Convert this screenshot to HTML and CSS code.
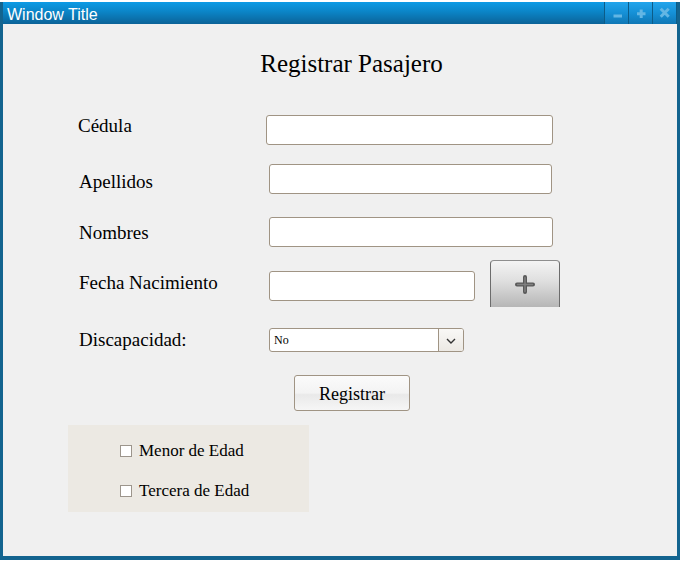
FILE: index.html
```html
<!DOCTYPE html>
<html lang="es">
<head>
<meta charset="utf-8">
<title>Registrar Pasajero</title>
<link rel="stylesheet" href="styles.css">
</head>
<body>
<div class="window">
  <div class="titlebar">
    <span class="title">Window Title</span>
    <div class="controls">
      <div class="ctl">
        <svg width="23" height="22" viewBox="0 0 23 22"><path d="M8.5 14H17" stroke="#63b6e4" stroke-width="3"/></svg>
      </div>
      <div class="ctl">
        <svg width="23" height="22" viewBox="0 0 23 22"><path d="M8 11.7H16.5M12.2 7.5V16" stroke="#63b6e4" stroke-width="3"/></svg>
      </div>
      <div class="ctl">
        <svg width="23" height="22" viewBox="0 0 23 22"><path d="M7.7 6.8L15.7 14.8M15.7 6.8L7.7 14.8" stroke="#63b6e4" stroke-width="3"/></svg>
      </div>
    </div>
  </div>
  <div class="content">
    <h1 class="heading">Registrar Pasajero</h1>

    <div class="row row-cedula">
      <label class="lbl lbl-cedula">Cédula</label>
      <input class="field field-cedula" type="text">
    </div>

    <div class="row row-apellidos">
      <label class="lbl lbl-apellidos">Apellidos</label>
      <input class="field field-apellidos" type="text">
    </div>

    <div class="row row-nombres">
      <label class="lbl lbl-nombres">Nombres</label>
      <input class="field field-nombres" type="text">
    </div>

    <div class="row row-fecha">
      <label class="lbl lbl-fecha">Fecha Nacimiento</label>
      <input class="field field-fecha" type="text">
      <div class="plus-btn">
        <svg width="22" height="20" viewBox="0 0 22 20">
          <path d="M3 9.5H19M11 2V17" stroke="#585858" stroke-width="4" stroke-linecap="round"/>
          <path d="M3.5 9.5H18.5M11 2.5V16.5" stroke="#808080" stroke-width="1.4" stroke-linecap="round"/>
        </svg>
      </div>
    </div>

    <div class="row row-disc">
      <label class="lbl lbl-disc">Discapacidad:</label>
      <div class="select">
        <span class="select-text">No</span>
        <span class="select-btn">
          <svg width="10" height="6" viewBox="0 0 10 6"><path d="M1 1L5 5L9 1" fill="none" stroke="#333" stroke-width="1.4"/></svg>
        </span>
      </div>
    </div>

    <div class="submit-row">
      <div class="submit">Registrar</div>
    </div>

    <div class="panel">
      <div class="check"><span class="box"></span><span class="check-text">Menor de Edad</span></div>
      <div class="check"><span class="box"></span><span class="check-text">Tercera de Edad</span></div>
    </div>
  </div>
</div>
</body>
</html>
```

FILE: styles.css
```css
* { box-sizing: border-box; }

html, body {
  margin: 0;
  padding: 0;
  background: #ffffff;
}

.window {
  margin-top: 2px;
  width: 680px;
  height: 558px;
  background: #13648f;
  border-left: 3px solid #13648f;
  border-right: 3px solid #13648f;
  border-bottom: 4px solid #13648f;
  display: flex;
  flex-direction: column;
}

.titlebar {
  height: 22px;
  display: flex;
  background: linear-gradient(#0c9be6, #0b84c6 45%, #0b6398);
}

.title {
  padding-left: 4px;
  padding-top: 3px;
  font-family: "Liberation Sans", Arial, sans-serif;
  font-size: 16px;
  line-height: 19px;
  color: #ffffff;
}

.controls {
  margin-left: auto;
  display: flex;
  border-right: 1px solid #0c5c88;
}

.ctl {
  width: 24px;
  height: 22px;
  border-left: 1px solid #0c5c88;
  background: linear-gradient(#22a5ec, #1590d6 50%, #0f77b5);
}

.ctl svg { display: block; }

.content {
  flex: 1;
  background: #f0f0f0;
  font-family: "Liberation Serif", "Times New Roman", serif;
  color: #000;
}

.heading {
  margin: 25px 0 0 0;
  padding-left: 23px;
  text-align: center;
  font-size: 25px;
  line-height: 30px;
  font-weight: normal;
}

.row {
  display: flex;
  align-items: flex-start;
  margin-left: 75px;
}

.lbl {
  font-size: 19px;
  line-height: 20px;
  width: 191px;
  flex: none;
}

.field {
  display: block;
  margin: 0;
  height: 30px;
  border: 1px solid #a09484;
  border-radius: 3px;
  background: #ffffff;
  padding: 0 4px;
  font-family: "Liberation Serif", serif;
  font-size: 16px;
  outline: none;
}

.row-cedula { margin-top: 36px; }
.lbl-cedula { width: 188px; padding-top: 1px; }
.field-cedula { width: 287px; }

.row-apellidos { margin-top: 19px; }
.lbl-apellidos { padding-top: 8px; padding-left: 1px; }
.field-apellidos { width: 283px; }

.row-nombres { margin-top: 23px; }
.lbl-nombres { padding-top: 6px; padding-left: 1px; }
.field-nombres { width: 284px; }

.row-fecha { margin-top: 13px; }
.lbl-fecha { padding-top: 13px; padding-left: 1px; }
.field-fecha { width: 206px; margin-top: 11px; }

.plus-btn {
  margin-left: 15px;
  width: 70px;
  height: 47px;
  border: 1px solid #8e8e8e;
  border-bottom: none;
  border-left-color: #6c6c6c;
  border-right-color: #6c6c6c;
  border-radius: 4px 4px 0 0;
  background: linear-gradient(#f4f4f4, #dedede 45%, #b6b6b6);
  display: flex;
  align-items: center;
  justify-content: center;
}

.plus-btn svg { display: block; margin-top: 1px; }

.row-disc { margin-top: 21px; }
.lbl-disc { padding-top: 2px; padding-left: 1px; }

.select {
  display: flex;
  width: 195px;
  height: 24px;
  border: 1px solid #a09484;
  border-radius: 3px;
  background: #ffffff;
  overflow: hidden;
}

.select-text {
  flex: 1;
  padding-left: 4px;
  font-size: 12px;
  line-height: 22px;
}

.select-btn {
  width: 25px;
  border-left: 1px solid #a09484;
  background: linear-gradient(#f9f8f6, #ece9e4);
  display: flex;
  align-items: center;
  justify-content: center;
}

.select-btn svg { display: block; margin-top: 1px; }

.submit-row {
  margin-top: 23px;
  margin-left: 291px;
}

.submit {
  width: 116px;
  height: 36px;
  border: 1px solid #a09484;
  border-radius: 3px;
  background: linear-gradient(#fbfbfb, #f3f3f3 50%, #e9e9e9 55%, #f6f6f6);
  text-align: center;
  font-size: 18px;
  line-height: 36px;
}

.panel {
  margin-top: 14px;
  margin-left: 65px;
  width: 241px;
  height: 87px;
  background: #ece9e3;
  padding-top: 16px;
  padding-left: 52px;
  display: flex;
  flex-direction: column;
  gap: 20px;
}

.check {
  display: flex;
  align-items: center;
  height: 20px;
}

.box {
  width: 12px;
  height: 12px;
  border: 1px solid #9c958c;
  background: #ffffff;
  flex: none;
}

.check-text {
  margin-left: 7px;
  font-size: 17px;
  line-height: 20px;
}
```
